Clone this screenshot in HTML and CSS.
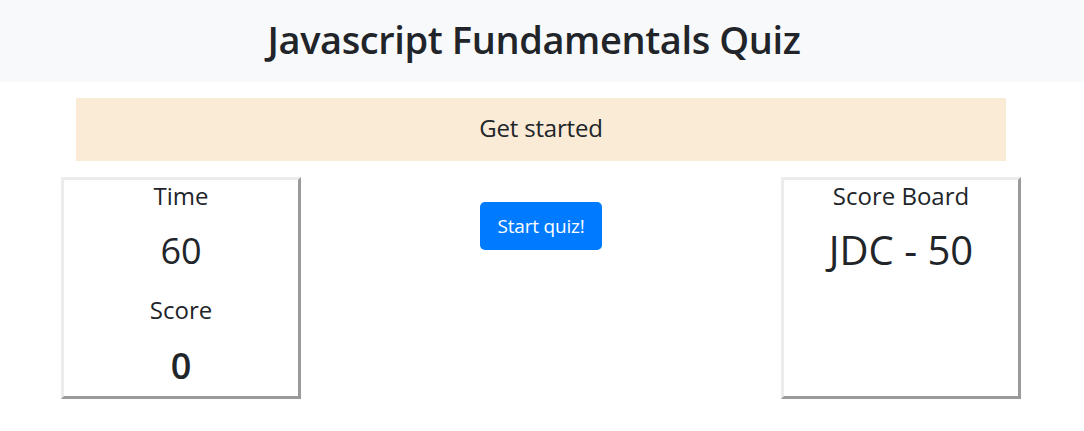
FILE: index.html
```html
<!DOCTYPE html>
<html lang="en">
<head>
<meta charset="utf-8">
<title>Javascript Fundamentals Quiz</title>
<link rel="stylesheet" href="styles.css">
</head>
<body>
<header class="masthead">
  <h1 class="title">Javascript Fundamentals Quiz</h1>
</header>
<main class="container">
  <div class="banner">
    <h4 class="banner-text">Get started</h4>
  </div>
  <div class="row">
    <section class="panel">
      <h4 class="panel-label">Time</h4>
      <div class="panel-value">60</div>
      <h4 class="panel-label gap">Score</h4>
      <div class="panel-value bold">0</div>
    </section>
    <div class="middle">
      <button class="btn-start" type="button">Start quiz!</button>
    </div>
    <section class="panel">
      <h4 class="panel-label">Score Board</h4>
      <div class="panel-value board">JDC - 50</div>
    </section>
  </div>
</main>
</body>
</html>
```
FILE: styles.css
```css
* { box-sizing: border-box; }
body {
  margin: 0;
  font-family: "Open Sans", "Noto Sans", sans-serif;
  color: #212529;
  background: #fff;
}
.masthead {
  background: #f8f9fa;
  height: 82px;
  display: flex;
  align-items: center;
  justify-content: center;
}
.title {
  margin: 0 16px 0 0;
  font-size: 38px;
  font-weight: 600;
  letter-spacing: -0.4px;
  line-height: 1;
  padding-bottom: 4px;
}
.container {
  width: 960px;
  margin: 16px auto 0;
}
.banner {
  margin: 0 16px 0 14px;
  height: 63px;
  background: #faebd7;
  display: flex;
  align-items: center;
  justify-content: center;
  padding-bottom: 4px;
}
.banner-text {
  margin: 0;
  font-size: 24px;
  font-weight: 500;
  letter-spacing: -0.2px;
}
.row {
  display: flex;
  margin-top: 16px;
  margin-left: -1px;
  margin-right: 1px;
}
.panel {
  width: 240px;
  height: 222px;
  border: 3px solid;
  border-color: #ececec #9a9a9a #9a9a9a #ececec;
  display: flex;
  flex-direction: column;
  align-items: center;
}
.middle {
  flex: 1;
  display: flex;
  justify-content: center;
  padding-top: 25px;
}
.btn-start {
  width: 122px;
  height: 48px;
  background: #007bff;
  color: #fff;
  border: 0;
  border-radius: 5px;
  font-family: inherit;
  font-size: 19px;
  letter-spacing: -0.2px;
}
.panel-label {
  margin: 0;
  font-size: 24px;
  font-weight: 500;
  line-height: 32px;
}
.panel-label.gap { margin-top: 20px; }
.panel-value {
  font-size: 36px;
  line-height: 46px;
  margin-top: 16px;
}
.panel-value.bold { font-weight: 600; margin-top: 17px; }
.panel-value.board { font-size: 40px; margin-top: 15px; }
```
